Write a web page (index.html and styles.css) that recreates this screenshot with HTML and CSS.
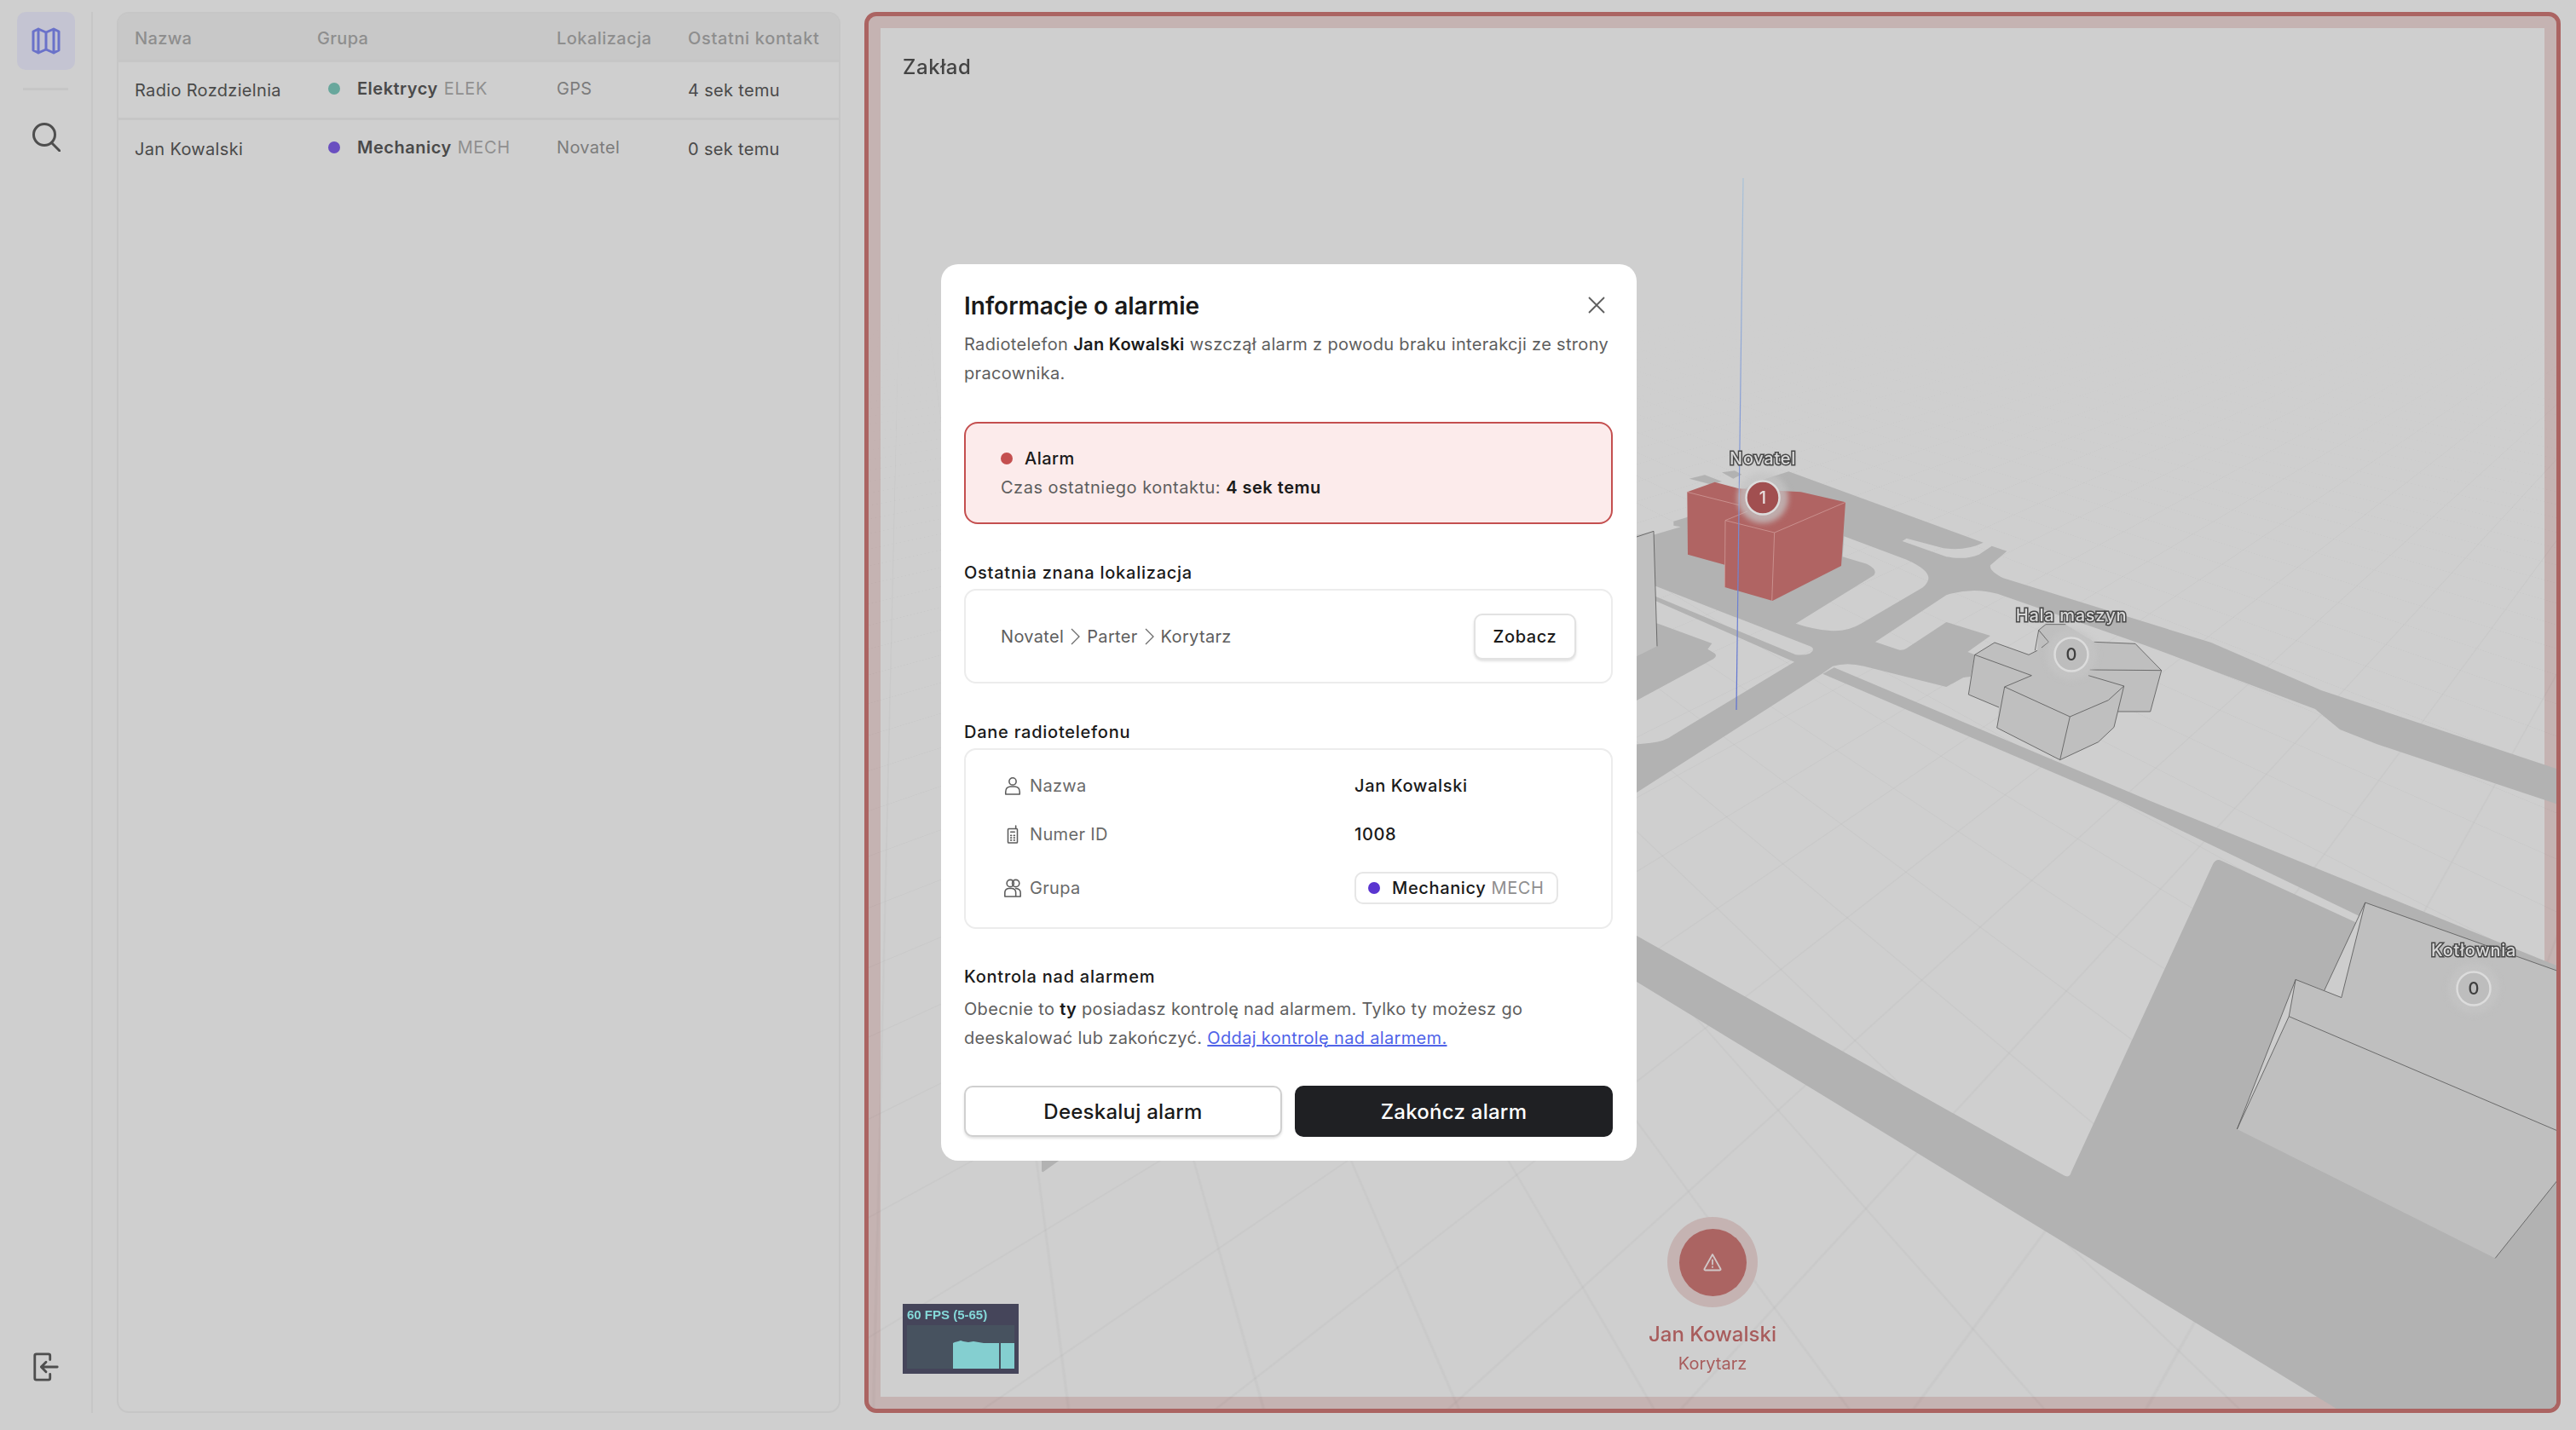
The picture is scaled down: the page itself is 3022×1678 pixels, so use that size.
FILE: index.html
```html
<!DOCTYPE html>
<html lang="pl">
<head>
    <meta charset="UTF-8">
    <title>Informacje o alarmie</title>
    <link rel="stylesheet" href="styles.css">
</head>
<body>
    <div class="app">
        <nav class="sidebar">
            <a class="nav-item nav-active" href="#">
                <svg class="nav-icon" viewBox="0 0 34 30"><path d="M17 5 L8 1 L2 4 V26 L8 29 L17 25 L26 29 L32 26 V4 L26 1 Z M17 5 V25 M8 1 V29 M26 1 V29"/></svg>
            </a>
            <div class="nav-line"></div>
            <a class="nav-item" href="#">
                <svg class="nav-icon" viewBox="0 0 34 34"><circle cx="15" cy="14" r="12.5"/><path d="M23.5 23.5 L33 33"/></svg>
            </a>
            <a class="nav-item nav-bottom" href="#">
                <svg class="nav-icon" viewBox="0 0 32 36"><path d="M21 9 V4 Q21 2 19 2 H4 Q2 2 2 4 V32 Q2 34 4 34 H19 Q21 34 21 32 V27 M30 18 H10 M16 12 L10 18 L16 24"/></svg>
            </a>
        </nav>

        <section class="list-panel">
            <table class="radio-table">
                <thead>
                    <tr><th class="col-name">Nazwa</th><th class="col-group">Grupa</th><th class="col-loc">Lokalizacja</th><th class="col-last">Ostatni kontakt</th></tr>
                </thead>
                <tbody>
                    <tr>
                        <td>Radio Rozdzielnia</td>
                        <td class="cell-up"><span class="group-tag"><i class="dot dot-green"></i><b>Elektrycy</b> <span class="abbr">ELEK</span></span></td>
                        <td class="cell-up muted">GPS</td>
                        <td>4 sek temu</td>
                    </tr>
                    <tr>
                        <td>Jan Kowalski</td>
                        <td class="cell-up"><span class="group-tag"><i class="dot dot-purple"></i><b>Mechanicy</b> <span class="abbr">MECH</span></span></td>
                        <td class="cell-up muted">Novatel</td>
                        <td>0 sek temu</td>
                    </tr>
                </tbody>
            </table>
        </section>

        <section class="map-panel">
            <div class="grid-view"><div class="grid-plane"></div></div>

            <svg class="map-canvas" viewBox="1019 19 1980 1634">
                <defs>
                    <linearGradient id="beam" gradientUnits="userSpaceOnUse" x1="2045" y1="209" x2="2037" y2="833">
                        <stop offset="0" stop-color="#a9c2d8"/>
                        <stop offset="1" stop-color="#5b6fd2"/>
                    </linearGradient>
                </defs>

                <path class="road" d="M1920,1098 L2419,1378 Q2428,1384 2430,1375 L2596,1014 Q2600,1007 2606,1010 L2999,1190 V1653 H2741 L1920,1152 Z M1222,1360 H1245 L1224,1375 Q1222,1376 1222,1373 Z"/>

                <!-- drogi i parkingi wokol budynkow -->
                <g transform="translate(1920 520) scale(.33333)">
                    <path class="road" fill-rule="evenodd" d="M-100,370 L155,295 L130,290 L130,275 L175,262 L440,130 L535,100 L1220,350 L1250,362 L1303,380 L1245,430 Q1240,450 1290,475 L2022,702 L2409,870 L3237,1146 V1270 L2604,1059 L2475,1008 L2388,936 L1788,711 L1270,530 Q1180,505 1090,535 L840,700 L925,728 Q940,730 950,722 L1090,630 L1245,678 L1165,735 L1190,745 L1175,822 L1150,825 L1090,858 L800,785 Q740,770 690,785 L655,810 L0,1230 L-100,1300 V1070 L50,1055 Q100,1050 125,1030 L555,770 L-100,482 Z
                        M730,328 L950,410 Q1040,450 1025,485 Q1015,505 1000,512 L790,635 Q740,665 680,660 Q620,655 560,635 L835,465 Q850,445 810,425 L725,400 Z
                        M935,345 L950,335 L1080,370 Q1160,380 1220,350 L1250,362 L1205,392 Q1160,412 1090,400 Z
                        M-100,438 L610,715 Q632,725 610,740 Q590,748 560,745 L-100,470 Z"/>
                    <path class="road" d="M185,125 L240,112 L300,135 L260,145 Z M300,103 L345,97 L370,110 L340,125 Z"/>
                    <path class="road" d="M-100,600 L75,635 L265,705 L250,725 L275,740 Q285,750 270,760 L-100,960 Z"/>
                    <path class="road" d="M695,790 L1809,1260 L3237,1839 V1980 L2550,1668 L1701,1260 L655,812 Z"/>

                    <path class="block" d="M-100,345 L60,310 L72,715 L-100,800 Z"/>
                    <path class="edge" d="M0,330 L60,310 L72,715"/>

                    <path class="block-red" d="M178,172 L275,137 L360,160 L578,172 L735,208 L720,432 L478,555 L310,507 L310,428 L180,392 Z"/>
                    <path class="edge-red" d="M178,172 L360,218 M312,272 L485,315 L735,208 M312,272 L390,240 M485,315 L476,555 M312,272 L310,507"/>
                </g>

                <!-- hala maszyn -->
                <g transform="translate(2280 680) scale(.33333)">
                    <path class="block" d="M110,265 L180,222 L300,265 L330,250 L335,178 L360,158 L430,158 L530,220 L675,226 L767,320 L728,465 L615,465 L600,520 L545,572 L410,635 L188,522 L195,450 L88,405 Z"/>
                    <path class="edge" d="M110,265 L310,338 L215,378 L445,483 L410,635 M445,483 L580,425 L635,375 L600,520 L545,572 L410,635 L188,522 L215,378 M515,318 L767,320 M530,220 L675,226 L767,320 L728,465 L615,465 M510,338 L635,375 M110,265 L88,405 L195,450 M110,265 L180,222 L300,265 L330,250 M335,178 L322,250 M335,178 L370,220 L345,240 M335,178 L360,158 L430,158"/>
                </g>

                <!-- kotlownia -->
                <g transform="translate(1900 940) scale(.71581 .47059)">
                    <path class="block-light" d="M1222,253 L1155,472 L1108,445 L1012,818 L1097,537 L1108,445 L1183,490 Z"/>
                    <path class="block" d="M1222,253 L1540,425 V940 L1435,1140 L1012,818 L1097,537 L1108,445 L1183,490 Z"/>
                    <path class="edge" d="M1222,253 L1540,425 M1222,253 L1183,490 L1108,445 M1222,253 L1155,472 M1108,445 L1097,537 L1540,824 M1108,445 L1012,818 M1097,537 L1012,818 M1540,940 L1435,1140"/>
                </g>

                <line class="beam" x1="2045" y1="209" x2="2037" y2="833"/>

                <circle class="pin-halo" cx="2068" cy="584" r="30"/>
                <circle class="pin pin-alarm" cx="2068" cy="584" r="19.5"/>
                <text class="pin-num pin-num-alarm" x="2068" y="591">1</text>
                <text class="map-label" x="2068" y="545">Novatel</text>

                <circle class="pin-halo" cx="2430" cy="768" r="30"/>
                <circle class="pin" cx="2430" cy="768" r="19.5"/>
                <text class="pin-num" x="2430" y="775">0</text>
                <text class="map-label" x="2430" y="729">Hala maszyn</text>

                <circle class="pin-halo" cx="2902" cy="1160" r="30"/>
                <circle class="pin" cx="2902" cy="1160" r="19.5"/>
                <text class="pin-num" x="2902" y="1167">0</text>
                <text class="map-label" x="2902" y="1122">Kotłownia</text>
            </svg>

            <h2 class="map-title">Zakład</h2>

            <div class="fps-box">
                <div class="fps-text">60 FPS (5-65)</div>
                <svg class="fps-graph" viewBox="0 0 126 51" preserveAspectRatio="none">
                    <path class="fps-bars" d="M54 51 V21 L56 20 L60 19 L63 18 L66 19 L72 20 L78 19 L84 20 L90 21 L108 21 V51 Z M110 21 H126 V51 H110 Z"/>
                </svg>
            </div>

            <div class="person-marker">
                <div class="person-ring">
                    <div class="person-core">
                        <svg class="person-icon" viewBox="0 0 24 24"><path d="M12 3 L21.5 20 Q22 21.5 20.5 21.5 H3.5 Q2 21.5 2.5 20 Z M12 9.5 V14.5 M12 17.5 V18"/></svg>
                    </div>
                </div>
                <div class="person-name">Jan Kowalski</div>
                <div class="person-place">Korytarz</div>
            </div>
        </section>
    </div>

    <div class="modal-layer">
        <div class="modal">
            <button class="modal-close">
                <svg viewBox="0 0 20 20"><path d="M1 1 L19 19 M19 1 L1 19"/></svg>
            </button>
            <h1 class="modal-title">Informacje o alarmie</h1>
            <p class="modal-text">Radiotelefon <strong>Jan Kowalski</strong> wszczął alarm z powodu braku interakcji ze strony pracownika.</p>

            <div class="alarm-box">
                <div class="alarm-head"><i class="dot dot-red"></i>Alarm</div>
                <div class="alarm-sub">Czas ostatniego kontaktu: <strong>4 sek temu</strong></div>
            </div>

            <h3 class="section-title">Ostatnia znana lokalizacja</h3>
            <div class="card loc-card">
                <div class="crumbs">
                    <span>Novatel</span>
                    <svg class="crumb-arrow" viewBox="0 0 11 20"><path d="M1 1 L10 10 L1 19"/></svg>
                    <span>Parter</span>
                    <svg class="crumb-arrow" viewBox="0 0 11 20"><path d="M1 1 L10 10 L1 19"/></svg>
                    <span>Korytarz</span>
                </div>
                <button class="btn-small">Zobacz</button>
            </div>

            <h3 class="section-title">Dane radiotelefonu</h3>
            <div class="card data-card">
                <div class="data-row">
                    <div class="data-label">
                        <svg class="data-icon" viewBox="0 0 24 24"><circle cx="12" cy="6.5" r="4.5"/><path d="M3 23 V20 Q3 13.5 9 13 H15 Q21 13.5 21 20 V23 Z"/></svg>
                        Nazwa
                    </div>
                    <div class="data-value">Jan Kowalski</div>
                </div>
                <div class="data-row">
                    <div class="data-label">
                        <svg class="data-icon" viewBox="0 0 24 24"><path d="M16 1 V5 M7 5 H17 Q18 5 18 6 V22 Q18 23 17 23 H7 Q6 23 6 22 V6 Q6 5 7 5 Z M9.5 9 H14.5 M9.5 13.5 H10.5 M13.5 13.5 H14.5 M9.5 16.5 H10.5 M13.5 16.5 H14.5 M9.5 19.5 H10.5 M13.5 19.5 H14.5"/></svg>
                        Numer ID
                    </div>
                    <div class="data-value">1008</div>
                </div>
                <div class="data-row data-row-group">
                    <div class="data-label">
                        <svg class="data-icon data-icon-wide" viewBox="0 0 24 24"><circle cx="9" cy="6" r="4.5"/><circle cx="16" cy="6" r="4.5"/><path d="M2 23 V18 Q2 13 7 12.5 H11 Q16 13 16 18 V23 Z M16 12.5 Q22 13 22 18 V23 H16"/></svg>
                        Grupa
                    </div>
                    <div class="data-value"><span class="pill"><i class="dot dot-violet"></i>Mechanicy <span class="abbr">MECH</span></span></div>
                </div>
            </div>

            <h3 class="section-title section-control">Kontrola nad alarmem</h3>
            <p class="modal-text control-text">Obecnie to <strong>ty</strong> posiadasz kontrolę nad alarmem. Tylko ty możesz go deeskalować lub zakończyć. <a href="#">Oddaj kontrolę nad alarmem.</a></p>

            <div class="modal-actions">
                <button class="btn btn-light">Deeskaluj alarm</button>
                <button class="btn btn-dark">Zakończ alarm</button>
            </div>
        </div>
    </div>
</body>
</html>
```

FILE: styles.css
```css
*{
    box-sizing: border-box;
}
html, body{
    margin: 0;
    height: 100%;
}
body{
    background: #cfcfcf;
    color: #4a4a4a;
    font-family: Inter, "Liberation Sans", sans-serif;
    font-size: 20px;
    letter-spacing: .33px;
    overflow: hidden;
}
.app{
    display: flex;
    height: 100%;
    padding: 14px 18px 20px 0;
}

/* menu po lewej */
.sidebar{
    width: 109px;
    flex: none;
    display: flex;
    flex-direction: column;
    align-items: flex-start;
    padding-left: 20px;
    border-right: 2px solid #c6c6c6;
}
.nav-item{
    width: 68px;
    height: 68px;
    display: flex;
    align-items: center;
    justify-content: center;
    border-radius: 10px;
}
.nav-active{
    background: #c4c4d2;
}
.nav-active .nav-icon{
    stroke: #6a72c9;
}
.nav-icon{
    width: 34px;
    height: 34px;
    fill: none;
    stroke: #4e4e4e;
    stroke-width: 3;
    stroke-linecap: round;
    stroke-linejoin: round;
}
.nav-line{
    width: 53px;
    height: 3px;
    margin: 21px 0 21px 7px;
    background: #c6c6c6;
}
.nav-bottom{
    margin-top: auto;
    margin-bottom: 20px;
}

/* tabela radiotelefonow */
.list-panel{
    width: 849px;
    flex: none;
    margin: 0 28px;
    border: 2px solid #c6c6c6;
    border-radius: 14px;
    overflow: hidden;
}
.radio-table{
    width: 100%;
    border-collapse: collapse;
    table-layout: fixed;
    font-size: 20px;
}
.radio-table th{
    height: 55px;
    padding: 4px 0 0 19px;
    background: #c8c8c8;
    color: #8e8e8e;
    font-weight: 500;
    text-align: left;
    border-bottom: 3px solid #c6c6c6;
}
.radio-table .col-name{
    width: 233px;
}
.radio-table .col-group{
    width: 281px;
    padding-left: 0;
}
.radio-table .col-loc{
    width: 154px;
    padding-left: 0;
    letter-spacing: .45px;
}
.radio-table .col-last{
    padding-left: 0;
    letter-spacing: .65px;
}
.radio-table td{
    height: 68px;
    padding: 2px 0 0;
    border-bottom: 3px solid #c6c6c6;
}
.radio-table td:first-child{
    padding-left: 19px;
}
.radio-table tr:last-child td{
    border-bottom: 0;
}
.radio-table .cell-up{
    padding-bottom: 4px;
}
.muted{
    color: #7c7c7c;
}
.group-tag{
    display: flex;
    align-items: center;
    padding-left: 13px;
}
.group-tag b{
    font-weight: 600;
    margin-right: 7px;
    letter-spacing: .5px;
}
.abbr{
    color: #8f8f8f;
    letter-spacing: .6px;
}
.dot{
    display: inline-block;
    width: 14px;
    height: 14px;
    border-radius: 50%;
    flex: none;
}
.group-tag .dot{
    margin-right: 20px;
}
.dot-green{
    background: #68a79c;
}
.dot-purple{
    background: #6a4fc0;
}
.dot-red{
    background: #c44f4f;
}
.dot-violet{
    background: #5a35d0;
}

/* mapa */
.map-panel{
    position: relative;
    flex: 1;
    border: 5px solid #ab6462;
    border-radius: 14px;
    overflow: hidden;
    background: #cfcfcf;
    box-shadow: inset 0 0 0 14px #c5b3b2;
}
.grid-view{
    position: absolute;
    inset: 0;
    overflow: hidden;
    perspective: 900px;
    perspective-origin: 990px 817px;
    -webkit-mask-image: linear-gradient(to bottom, transparent 330px, #000 560px);
    mask-image: linear-gradient(to bottom, transparent 330px, #000 560px);
}
.grid-plane{
    position: absolute;
    left: -3510px;
    top: -3683px;
    width: 9000px;
    height: 9000px;
    transform: rotateX(52.7deg) rotateZ(-40deg);
    background-image:
        repeating-linear-gradient(to right, rgba(0,0,0,.028) 0 1px, transparent 1px 80px),
        repeating-linear-gradient(to bottom, rgba(0,0,0,.028) 0 1px, transparent 1px 80px);
}
.map-canvas{
    position: absolute;
    left: 0;
    top: 0;
    width: 100%;
    height: 100%;
}
.road{
    fill: #b2b2b2;
}
.block{
    fill: #bfbfbf;
}
.block-light{
    fill: #cdcdcd;
}
.block-red{
    fill: #b06463;
}
.edge, .edge-red{
    fill: none;
    stroke: #555;
    stroke-width: .8;
    stroke-linejoin: round;
    vector-effect: non-scaling-stroke;
}
.edge-red{
    stroke: #cf9a98;
}
.beam{
    stroke: url(#beam);
    stroke-width: 1.2;
}
.pin-halo{
    fill: rgba(196,196,196,.75);
    filter: blur(3px);
}
.pin{
    fill: #bdbdbd;
    stroke: #dcdcdc;
    stroke-width: 2.5;
}
.pin-alarm{
    fill: #a14f50;
}
.pin-num{
    fill: #3e3e3e;
    font-size: 20px;
    font-weight: 500;
    text-anchor: middle;
}
.pin-num-alarm{
    fill: #e8dede;
}
.map-label{
    fill: #d8d8d8;
    stroke: #484848;
    stroke-width: 3px;
    paint-order: stroke;
    font-size: 20px;
    font-weight: 500;
    letter-spacing: .7px;
    text-anchor: middle;
}
.map-title{
    position: absolute;
    left: 40px;
    top: 45px;
    margin: 0;
    color: #444;
    font-size: 24px;
    line-height: 30px;
    font-weight: 500;
    letter-spacing: .6px;
}
.fps-box{
    position: absolute;
    left: 40px;
    bottom: 41px;
    width: 136px;
    height: 82px;
    padding: 4px 5px 5px;
    background: #45455a;
    letter-spacing: 0;
}
.fps-text{
    height: 21px;
    color: #84d8d8;
    font-family: "Liberation Sans", sans-serif;
    font-size: 15px;
    line-height: 18px;
    font-weight: 700;
}
.fps-graph{
    display: block;
    width: 126px;
    height: 51px;
    background: #47525f;
}
.fps-bars{
    fill: #84cfd0;
}
.person-marker{
    position: absolute;
    left: 0;
    right: 0;
    bottom: 38px;
    display: flex;
    flex-direction: column;
    align-items: center;
    color: #a85c5c;
    letter-spacing: 0;
}
.person-ring{
    width: 106px;
    height: 106px;
    display: flex;
    align-items: center;
    justify-content: center;
    border-radius: 50%;
    background: #c5b3b2;
}
.person-core{
    width: 79px;
    height: 79px;
    display: flex;
    align-items: center;
    justify-content: center;
    border-radius: 50%;
    background: #ab6462;
}
.person-icon{
    width: 24px;
    height: 24px;
    fill: none;
    stroke: #d0c8c8;
    stroke-width: 1.8;
    stroke-linecap: round;
    stroke-linejoin: round;
}
.person-name{
    margin-top: 17px;
    font-size: 24px;
    line-height: 30px;
    font-weight: 500;
}
.person-place{
    margin-top: 4px;
    font-size: 20px;
    line-height: 30px;
}

/* okno z informacja o alarmie */
.modal-layer{
    position: fixed;
    inset: 0;
    display: flex;
    align-items: center;
    justify-content: center;
    padding: 0 0 6px 2px;
}
.modal{
    position: relative;
    width: 816px;
    padding: 32px 28px 28px 27px;
    background: #fff;
    border-radius: 20px;
    color: #5e5e5e;
}
.modal strong{
    color: #1a1a1a;
    font-weight: 600;
}
.modal-close{
    position: absolute;
    right: 37px;
    top: 38px;
    width: 20px;
    height: 20px;
    padding: 0;
    border: 0;
    background: none;
}
.modal-close svg{
    display: block;
    fill: none;
    stroke: #5e5e5e;
    stroke-width: 1.8;
}
.modal-title{
    margin: 0 0 11px;
    color: #1a1a1a;
    font-size: 28px;
    line-height: 34px;
    font-weight: 600;
    letter-spacing: 0;
}
.modal-text{
    margin: 0;
    line-height: 34px;
}
.alarm-box{
    margin-top: 40px;
    padding: 24px 41px;
    border: 2px solid #c44f4f;
    border-radius: 16px;
    background: #fcebeb;
    line-height: 34px;
    letter-spacing: .5px;
}
.alarm-head{
    display: flex;
    align-items: center;
    color: #1a1a1a;
    font-weight: 500;
}
.alarm-head .dot{
    margin-right: 14px;
}
.section-title{
    margin: 43px 0 5px;
    color: #1a1a1a;
    font-size: 20px;
    line-height: 28px;
    font-weight: 500;
    letter-spacing: .75px;
}
.section-control{
    margin: 42px 0 7px;
}
.card{
    border: 2px solid #ececec;
    border-radius: 14px;
}
.loc-card{
    display: flex;
    align-items: center;
    justify-content: space-between;
    height: 111px;
    padding: 0 41px;
}
.crumbs{
    display: flex;
    align-items: center;
}
.crumb-arrow{
    width: 11px;
    height: 20px;
    margin: 0 8px;
    fill: none;
    stroke: #6c6c6c;
    stroke-width: 1.3;
}
.btn-small{
    width: 120px;
    height: 54px;
    padding: 0;
    border: 2px solid #e2e2e2;
    border-radius: 10px;
    background: #fff;
    box-shadow: 0 2px 3px rgba(0,0,0,.12);
    color: #1a1a1a;
    font-family: inherit;
    font-size: 20px;
    font-weight: 500;
    letter-spacing: .6px;
}
.data-card{
    padding: 13px 41px 18px;
}
.data-row{
    display: grid;
    grid-template-columns: 415px 1fr;
    align-items: center;
    height: 57px;
}
.data-row-group{
    margin-top: 6px;
}
.data-label{
    display: flex;
    align-items: center;
    padding-left: 3px;
    color: #6a6a6a;
}
.data-icon{
    width: 22px;
    height: 24px;
    margin-right: 9px;
    fill: none;
    stroke: #5c5c5c;
    stroke-width: 1.7;
    stroke-linejoin: round;
    stroke-linecap: round;
}
.data-value{
    color: #1a1a1a;
    font-weight: 500;
    letter-spacing: .65px;
}
.pill{
    display: inline-flex;
    align-items: center;
    height: 38px;
    padding: 0 14px;
    border: 2px solid #e6e6e6;
    border-radius: 10px;
}
.pill .dot{
    margin-right: 14px;
}
.pill .abbr{
    margin-left: 6px;
    font-weight: 400;
}
.control-text a{
    color: #4f63e8;
}
.modal-actions{
    display: flex;
    gap: 15px;
    margin-top: 39px;
}
.btn{
    flex: 1;
    height: 60px;
    padding: 0;
    border-radius: 10px;
    font-family: inherit;
    font-size: 24px;
    font-weight: 500;
    letter-spacing: .25px;
}
.btn-light{
    border: 2px solid #d0d0d0;
    background: #fff;
    box-shadow: 0 2px 3px rgba(0,0,0,.12);
    color: #1a1a1a;
}
.btn-dark{
    border: 2px solid #1f2023;
    background: #1f2023;
    color: #fff;
}
```
